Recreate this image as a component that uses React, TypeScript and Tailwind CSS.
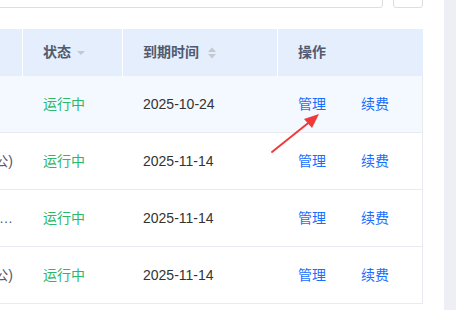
import React from 'react';

type Row = { name: string; status: string; expire: string; hover?: boolean };

const rows: Row[] = [
  { name: '', status: '运行中', expire: '2025-10-24', hover: true },
  { name: '云服务器(办公)', status: '运行中', expire: '2025-11-14' },
  { name: '云服务器…', status: '运行中', expire: '2025-11-14' },
  { name: '云服务器(办公)', status: '运行中', expire: '2025-11-14' },
];

const font = { fontFamily: '"Liberation Sans", "Noto Sans CJK SC", sans-serif' };

function CaretDown() {
  return (
    <svg width="8" height="6" viewBox="0 0 8 6" className="ml-[6px]">
      <path d="M0 1 L8 1 L4 5 Z" fill="#c5c8ce" />
    </svg>
  );
}

function CaretBoth() {
  return (
    <svg width="10" height="12" viewBox="0 0 10 12" className="ml-[8px]">
      <path d="M1 5 L9 5 L5 0.5 Z" fill="#c5c8ce" />
      <path d="M1 7 L9 7 L5 11.5 Z" fill="#c5c8ce" />
    </svg>
  );
}

export default function App() {
  return (
    <div className="flex h-[310px] w-[456px] overflow-hidden bg-white" style={font}>
      <div className="relative flex-1 pr-[21px]">
        <div className="-mt-[24px] flex gap-[10px]">
          <div className="-ml-[10px] h-[32px] flex-1 rounded-b-[3px] border border-[#dcdee2] bg-white" />
          <div className="h-[32px] w-[30px] rounded-b-[3px] border border-[#dcdee2] bg-white" />
        </div>

        <div className="mt-[21px] w-[423px]">
          <div className="grid h-[47px] grid-cols-[23px_100px_155px_1fr] bg-[#e4eefd] text-[14px] font-bold text-[#515a6e]">
            <div className="border-r border-white" />
            <div className="flex items-center border-r border-white pl-[20px]">
              状态
              <CaretDown />
            </div>
            <div className="flex items-center border-r border-white pl-[20px]">
              到期时间
              <CaretBoth />
            </div>
            <div className="flex items-center pl-[20px]">操作</div>
          </div>

          {rows.map((r, i) => (
            <div
              key={i}
              className={`grid h-[57px] grid-cols-[23px_100px_155px_1fr] border-b border-r border-[#e8eaef] text-[14px] ${
                r.hover ? 'bg-[#f4f8ff]' : 'bg-white'
              }`}
            >
              <div className="flex items-center justify-end overflow-hidden pr-[10px]">
                <span className="whitespace-nowrap text-[#515a6e]">{r.name}</span>
              </div>
              <div className="flex items-center pl-[20px] text-[#2cb86a]">{r.status}</div>
              <div className="flex items-center pl-[20px] text-[#333]">{r.expire}</div>
              <div className="flex items-center gap-[35px] pl-[20px] text-[#1a6dff]">
                <span>管理</span>
                <span>续费</span>
              </div>
            </div>
          ))}
        </div>

        <svg
          className="pointer-events-none absolute left-[268px] top-[108px]"
          width="56"
          height="48"
          viewBox="0 0 56 48"
        >
          <line x1="4" y1="44" x2="44" y2="12" stroke="#f03a3a" strokeWidth="2" strokeLinecap="round" />
          <path d="M51 6 L36 11 L44 20 Z" fill="#f03a3a" />
        </svg>
      </div>
      <div className="w-[13px] bg-[#eeeff4]" />
    </div>
  );
}
